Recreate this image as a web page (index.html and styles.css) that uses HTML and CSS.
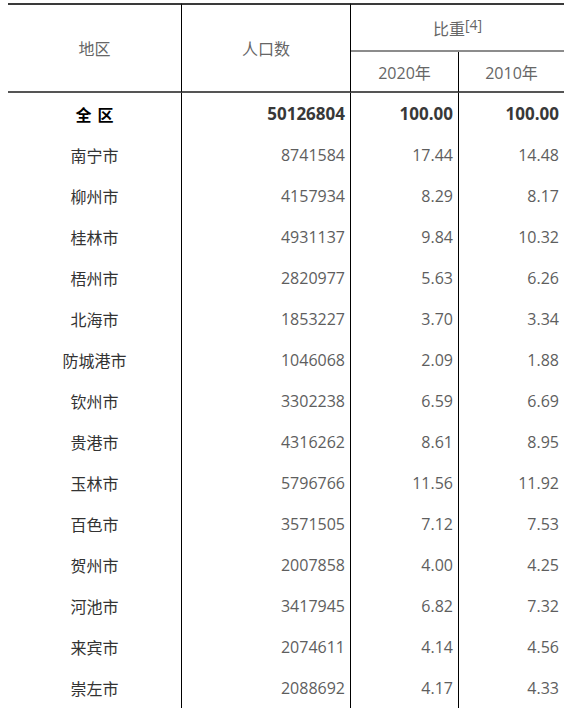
FILE: index.html
```html
<!DOCTYPE html>
<html lang="zh-CN">
<head>
<meta charset="utf-8">
<title>地区人口</title>
<link rel="stylesheet" href="styles.css">
</head>
<body>
<table class="pop">
  <colgroup>
    <col class="c-area">
    <col class="c-pop">
    <col class="c-y1">
    <col class="c-y2">
  </colgroup>
  <thead>
    <tr class="h1">
      <th class="top bottom vr" rowspan="2">地区</th>
      <th class="top bottom vr" rowspan="2">人口数</th>
      <th class="top mid" colspan="2">比重<sup>[4]</sup></th>
    </tr>
    <tr class="h2">
      <th class="bottom vr">2020年</th>
      <th class="bottom">2010年</th>
    </tr>
  </thead>
  <tbody>
    <tr class="total"><td class="name vr">全 区</td><td class="num vr">50126804</td><td class="num vr">100.00</td><td class="num">100.00</td></tr>
    <tr><td class="name vr">南宁市</td><td class="num vr">8741584</td><td class="num vr">17.44</td><td class="num">14.48</td></tr>
    <tr><td class="name vr">柳州市</td><td class="num vr">4157934</td><td class="num vr">8.29</td><td class="num">8.17</td></tr>
    <tr><td class="name vr">桂林市</td><td class="num vr">4931137</td><td class="num vr">9.84</td><td class="num">10.32</td></tr>
    <tr><td class="name vr">梧州市</td><td class="num vr">2820977</td><td class="num vr">5.63</td><td class="num">6.26</td></tr>
    <tr><td class="name vr">北海市</td><td class="num vr">1853227</td><td class="num vr">3.70</td><td class="num">3.34</td></tr>
    <tr><td class="name vr">防城港市</td><td class="num vr">1046068</td><td class="num vr">2.09</td><td class="num">1.88</td></tr>
    <tr><td class="name vr">钦州市</td><td class="num vr">3302238</td><td class="num vr">6.59</td><td class="num">6.69</td></tr>
    <tr><td class="name vr">贵港市</td><td class="num vr">4316262</td><td class="num vr">8.61</td><td class="num">8.95</td></tr>
    <tr><td class="name vr">玉林市</td><td class="num vr">5796766</td><td class="num vr">11.56</td><td class="num">11.92</td></tr>
    <tr><td class="name vr">百色市</td><td class="num vr">3571505</td><td class="num vr">7.12</td><td class="num">7.53</td></tr>
    <tr><td class="name vr">贺州市</td><td class="num vr">2007858</td><td class="num vr">4.00</td><td class="num">4.25</td></tr>
    <tr><td class="name vr">河池市</td><td class="num vr">3417945</td><td class="num vr">6.82</td><td class="num">7.32</td></tr>
    <tr><td class="name vr">来宾市</td><td class="num vr">2074611</td><td class="num vr">4.14</td><td class="num">4.56</td></tr>
    <tr><td class="name vr">崇左市</td><td class="num vr">2088692</td><td class="num vr">4.17</td><td class="num">4.33</td></tr>
  </tbody>
</table>
</body>
</html>
```

FILE: styles.css
```css
html, body {
  margin: 0;
  padding: 0;
  background: #fff;
}

body {
  font-family: "Open Sans", "Noto Sans CJK SC", sans-serif;
  font-size: 16px;
  color: #555;
}

.pop {
  margin: 3px 0 0 8px;
  width: 556px;
  border-collapse: separate;
  border-spacing: 0;
  table-layout: fixed;
}

.c-area { width: 174px; }
.c-pop { width: 169px; }
.c-y1 { width: 108px; }
.c-y2 { width: 105px; }

.pop th,
.pop td {
  box-sizing: border-box;
  padding: 0 5px;
  vertical-align: middle;
}

.pop th {
  font-weight: normal;
  color: #666;
  text-align: center;
  font-size: 16px;
}

.h1 th { height: 49px; }
.h2 th { height: 41px; }

.top { border-top: 2px solid #3a3a3a; }
.bottom { border-bottom: 2px solid #555; }
.mid { border-bottom: 2px solid #8c8c8c; }
.vr { border-right: 1px solid #000; }

.pop sup {
  font-size: 14px;
  vertical-align: 5px;
  line-height: 0;
}

.pop tbody td {
  height: 41px;
}

.name {
  text-align: center;
  font-size: 16px;
  color: #333;
}

.num {
  text-align: right;
  font-size: 16px;
  color: #5e5e5e;
}

.total td {
  font-weight: bold;
  font-size: 17px;
  color: #383838;
}

.total .name {
  color: #000;
  font-size: 16px;
  word-spacing: 2px;
}
```
